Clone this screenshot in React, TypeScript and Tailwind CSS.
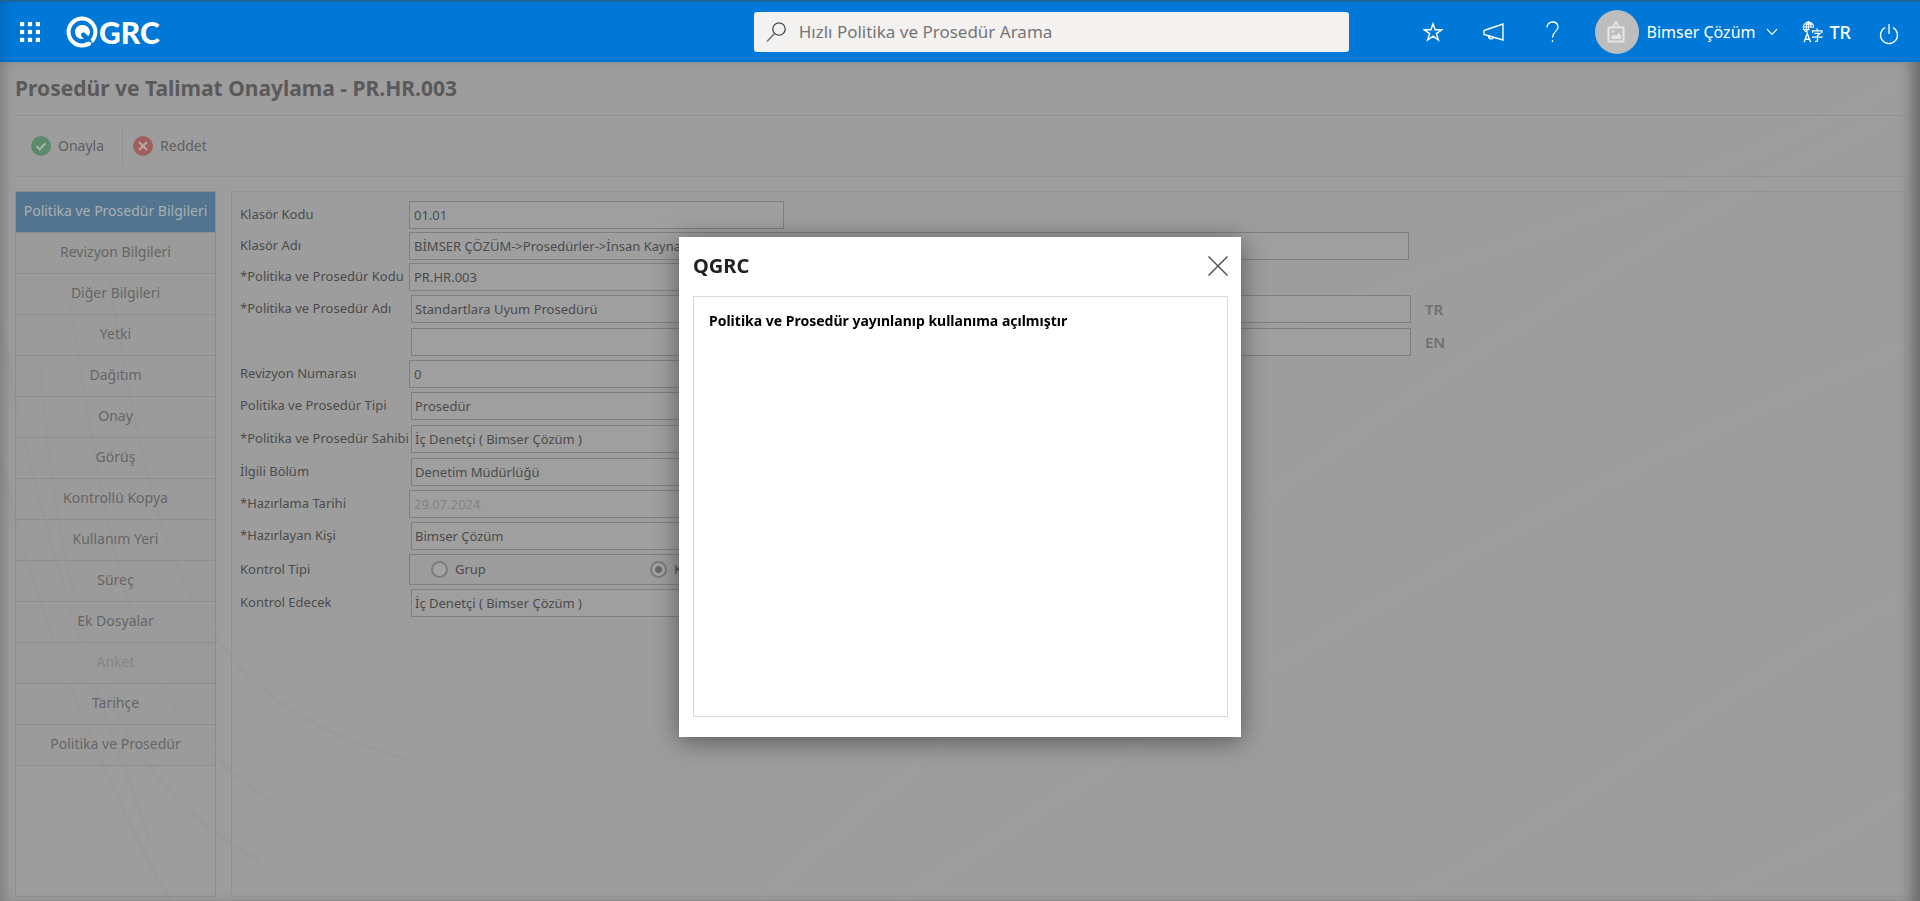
import React from "react";

const tabs = [
  "Politika ve Prosedür Bilgileri",
  "Revizyon Bilgileri",
  "Diğer Bilgileri",
  "Yetki",
  "Dağıtım",
  "Onay",
  "Görüş",
  "Kontrollü Kopya",
  "Kullanım Yeri",
  "Süreç",
  "Ek Dosyalar",
  "Anket",
  "Tarihçe",
  "Politika ve Prosedür",
];

type FieldRow = {
  id: string;
  label: string;
  value: string;
  inset?: boolean;
  wide?: boolean;
  disabled?: boolean;
  suffix?: string;
};

const rowsTop: FieldRow[] = [
  { id: "folder-code", label: "Klasör Kodu", value: "01.01" },
  { id: "folder-name", label: "Klasör Adı", value: "BİMSER ÇÖZÜM->Prosedürler->İnsan Kaynakları", wide: true },
  { id: "code", label: "*Politika ve Prosedür Kodu", value: "PR.HR.003" },
  { id: "name-tr", label: "*Politika ve Prosedür Adı", value: "Standartlara Uyum Prosedürü", inset: true, wide: true, suffix: "TR" },
  { id: "name-en", label: "", value: "", inset: true, wide: true, suffix: "EN" },
  { id: "revision", label: "Revizyon Numarası", value: "0" },
  { id: "type", label: "Politika ve Prosedür Tipi", value: "Prosedür", inset: true },
  { id: "owner", label: "*Politika ve Prosedür Sahibi", value: "İç Denetçi ( Bimser Çözüm )", inset: true },
  { id: "department", label: "İlgili Bölüm", value: "Denetim Müdürlüğü", inset: true },
  { id: "date", label: "*Hazırlama Tarihi", value: "29.07.2024", disabled: true },
  { id: "author", label: "*Hazırlayan Kişi", value: "Bimser Çözüm", inset: true },
];

const rowsBottom: FieldRow[] = [
  { id: "checker", label: "Kontrol Edecek", value: "İç Denetçi ( Bimser Çözüm )", inset: true },
];

function Field({ row }: { row: FieldRow }) {
  return (
    <div className={"flex items-center " + (row.inset ? "h-[33px] pt-px pb-1" : "h-[31px] pb-[3px]")}>
      <label htmlFor={row.id} className={"shrink-0 whitespace-nowrap " + (row.inset ? "w-[171px]" : "w-[169px]")}>
        {row.label}
      </label>
      <input
        id={row.id}
        aria-label={row.label || "Politika ve Prosedür Adı (EN)"}
        defaultValue={row.value}
        disabled={row.disabled}
        className={
          "h-7 border border-[#7f7f7f] bg-[#9f9f9f] outline-none " +
          (row.inset ? "px-[3px] " : "px-1 ") +
          (row.wide ? "w-[1000px] " : "w-[375px] ") +
          (row.disabled ? "text-[#838383]" : "text-[#4b4b4b]")
        }
      />
      {row.suffix && <span className="ml-3.5 text-[15px] font-semibold text-[#707070]">{row.suffix}</span>}
    </div>
  );
}

function Radio({ id, label, checked }: { id: string; label: string; checked?: boolean }) {
  return (
    <span className="flex w-[219px] shrink-0 items-center gap-[7px]">
      <span className="grid size-[17px] place-items-center">
        <input
          type="radio"
          name="control-type"
          id={id}
          defaultChecked={checked}
          className="peer col-start-1 row-start-1 size-[17px] appearance-none rounded-full border-2 border-[#7c7c7c] bg-[#a3a3a3]"
        />
        <span className="pointer-events-none col-start-1 row-start-1 size-[7px] rounded-full bg-[#6a6a6a] opacity-0 peer-checked:opacity-100" />
      </span>
      <label htmlFor={id}>{label}</label>
    </span>
  );
}

function Logo() {
  return (
    <span className="flex items-center gap-px">
      <svg width="32" height="32" viewBox="0 0 32 32" fill="none" aria-hidden="true">
        <circle cx="16" cy="16" r="13.4" stroke="#fff" strokeWidth="4" />
        <path d="M16 9a7 7 0 1 0 1.6 13.8l-2.8-3.6a3 3 0 0 1 3.600-2.600l4 3.600A7 7 0 0 0 16 9z" fill="#fff" />
        <path d="M19.500 24.500 24 24.500 26.500 28.500" stroke="#0078d7" strokeWidth="2" />
        <path d="M19 26.500 26 26.500 23 30z" fill="#fff" />
      </svg>
      <span className="font-[Lato,sans-serif] text-[30px] leading-9 font-black">GRC</span>
    </span>
  );
}

function Waves() {
  return (
    <svg
      className="pointer-events-none absolute inset-0 size-full"
      viewBox="0 0 1920 840"
      preserveAspectRatio="none"
      fill="none"
      aria-hidden="true"
    >
      <g stroke="#999999" strokeWidth="4" opacity="0.5">
        <path d="M0 260C40 480 100 640 150 780" />
        <path d="M0 400C40 560 90 690 170 840" />
        <path d="M40 300C60 560 110 720 260 800" />
        <path d="M70 240C120 560 140 650 270 740" />
        <path d="M110 220C160 540 210 640 410 700" />
      </g>
      <g stroke="#a0a0a0" strokeWidth="9" opacity="0.6">
        <path d="M760 840C1000 620 1500 240 1880 60" />
        <path d="M900 840C1200 640 1600 400 1920 280" />
        <path d="M1400 840C1600 740 1750 600 1920 530" />
        <path d="M1700 840C1780 800 1860 770 1920 720" />
        <path d="M1240 280C1440 200 1700 130 1900 20" />
      </g>
    </svg>
  );
}

function Header() {
  return (
    <header className="relative z-10 flex h-[62px] shrink-0 items-center border-t-2 border-[#1c6596] bg-[#0078d7] pl-5 pr-[21px] text-white shadow-[inset_14px_0_12px_-10px_#0067b8]">
      <div className="flex flex-[4] items-center">
        <button aria-label="Uygulamalar" className="mr-[26px]">
          <svg width="20" height="20" viewBox="0 0 19 19" fill="#fff">
            {[0, 7.5, 15].map((y) => [0, 7.5, 15].map((x) => <rect key={`${x}-${y}`} x={x} y={y} width="4" height="4" />))}
          </svg>
        </button>
        <a href="#" aria-label="QGRC">
          <Logo />
        </a>
      </div>
      <label className="flex h-10 w-[595px] items-center gap-3 rounded-[3px] bg-[#f3f2f1] px-3">
        <svg className="shrink-0" width="21" height="22" viewBox="0 0 21 22" fill="none" stroke="#4a4a4a" strokeWidth="1.300">
          <circle cx="13" cy="8" r="6.200" />
          <path d="M8.600 12.400 1 20.500" stroke="#777" strokeWidth="1.600" />
        </svg>
        <input
          aria-label="Hızlı Politika ve Prosedür Arama"
          placeholder="Hızlı Politika ve Prosedür Arama"
          className="w-full bg-transparent text-[17px] text-[#333] outline-none placeholder:text-[#757575]"
        />
      </label>
      <div className="flex flex-[3] items-center justify-end">
        <button aria-label="Favoriler">
          <svg width="20" height="20" viewBox="0 0 20 20" fill="none" stroke="#fff" strokeWidth="1.400">
            <path d="M10 1.800 12.100 7.800H18.600L13.400 11.600 15.400 18 10 14.100 4.600 18 6.600 11.600 1.400 7.800H7.900z" />
          </svg>
        </button>
        <button aria-label="Duyurular" className="ml-10">
          <svg width="21" height="20" viewBox="0 0 21 20" fill="none" stroke="#fff" strokeWidth="1.400">
            <path d="M1 8.500 20 2V18L1 12.500zM5.500 13.800A2.800 2.800 0 0 0 10.800 15.300" />
          </svg>
        </button>
        <button aria-label="Yardım" className="ml-[42px]">
          <svg width="13" height="22" viewBox="0 0 13 22" fill="none" stroke="#fff" strokeWidth="1.300">
            <path d="M1 6.500C1 3 3.300 1 6.500 1S12 3 12 6.300C12 10.500 6.500 10.500 6.500 16.500M6.500 19.300V21" />
          </svg>
        </button>
        <button className="ml-9 flex items-center">
          <span className="flex size-11 items-center justify-center rounded-full bg-[#bdbdbd]">
            <svg width="19" height="24" viewBox="0 0 19 24" fill="none" stroke="#e6e6e6" strokeWidth="1.400">
              <rect x="1.500" y="7.500" width="15" height="14" strokeWidth="2" />
              <path d="M5.500 7 9 2.500 12.500 7" />
              <circle cx="9" cy="2" r="1.300" fill="#e6e6e6" stroke="none" />
              <circle cx="6" cy="11.500" r="1.300" fill="#e6e6e6" stroke="none" />
              <path d="M4.500 19V16.500L7 14.500 9 16 11.500 12.500 14 15.500V19z" fill="#e6e6e6" stroke="none" />
            </svg>
          </span>
          <span className="ml-2 text-base">Bimser Çözüm</span>
          <svg className="ml-2.5" width="12" height="8" viewBox="0 0 12 8" fill="none" stroke="#fff" strokeWidth="1.200">
            <path d="M1 1.200 6 6.500 11 1.200" />
          </svg>
        </button>
        <button className="ml-6 flex items-center gap-[7px]">
          <svg width="21" height="22" viewBox="0 0 21 22" fill="none" stroke="#fff" strokeWidth="1.100">
            <path d="M5 11.300A5.200 5.200 0 1 1 11.700 6.500" />
            <path d="M5.200 11C3.600 8 3.800 3.500 6.500.800C8.600 2.500 9.100 4.800 9 6.500" />
            <path d="M1.300 6H11.700M2.200 3.300H10.800M2 8.600H7.500M6.500.800V8.500" />
            <path d="M2 21.300 5.300 12.500 8.600 21.300M3.200 18.300H7.400" strokeWidth="1.400" />
            <path d="M15.200 7.500V9.500M10.500 12V9.800H20V12M12.300 12.300H18L15.500 14.500V19.500Q15.500 20.700 13 20.300M10 16.200H20.700" strokeWidth="1.300" />
          </svg>
          <span className="text-lg font-medium">TR</span>
        </button>
        <button aria-label="Çıkış" className="ml-7 pt-1">
          <svg width="20" height="22" viewBox="0 0 20 22" fill="none" stroke="#fff" strokeWidth="1.300">
            <path d="M10 1V11M6.200 4.500A8.500 8.500 0 1 0 13.800 4.500" />
          </svg>
        </button>
      </div>
    </header>
  );
}

export default function App() {
  return (
    <div className="relative flex min-h-screen flex-col overflow-hidden bg-[#9d9d9d] font-['Noto_Sans',sans-serif] text-[#5f5f5f]">
      <Header />
      <div className="relative flex flex-1 flex-col px-[15px] pb-1">
        <Waves />
        <div className="pointer-events-none absolute inset-0 shadow-[inset_12px_0_12px_-8px_#7d7d7d,inset_-14px_0_14px_-6px_#6b6b6b]" />
        <h1 className="relative flex h-[54px] items-center border-b border-[#919191] text-[21px] font-bold text-[#5a5a5a]">
          Prosedür ve Talimat Onaylama - PR.HR.003
        </h1>
        <div className="relative flex h-[61px] items-center border-b border-[#919191] text-sm">
          <button className="flex h-10 items-center gap-[7px] border-r border-[#8f8f8f] pl-4 pr-[18px]">
            <svg width="20" height="20" viewBox="0 0 20 20" fill="none">
              <circle cx="10" cy="10" r="10" fill="#5c8a6c" />
              <path d="M5.500 10.200 8.700 13.300 14.500 7.300" stroke="#a5b5aa" strokeWidth="2.200" />
            </svg>
            Onayla
          </button>
          <button className="flex h-10 items-center gap-[7px] pl-2.5">
            <svg width="20" height="20" viewBox="0 0 20 20" fill="none">
              <circle cx="10" cy="10" r="10" fill="#a05f5f" />
              <path d="M6 6 14 14M14 6 6 14" stroke="#b8a6a6" strokeWidth="2.200" />
            </svg>
            Reddet
          </button>
        </div>
        <main className="relative mt-3.5 flex flex-1 gap-[15px]">
          <nav className="w-[201px] shrink-0 border border-[#8d8d8d] text-sm">
            {tabs.map((tab, i) => (
              <button
                key={tab}
                disabled={tab === "Anket"}
                className={
                  "block h-[41px] w-full whitespace-nowrap border-b border-[#8d8d8d] pb-0.5 " +
                  (i === 0 ? "bg-[#52748f] text-[#a8b0b6]" : tab === "Anket" ? "bg-[#9a9a9a] text-[#858585]" : "bg-[#999]/60 text-[#666]")
                }
              >
                {tab}
              </button>
            ))}
          </nav>
          <form className="min-w-0 flex-1 border border-[#919191] pl-2 pt-[9px] text-[13px] text-[#4b4b4b]">
            {rowsTop.map((row) => (
              <Field key={row.id} row={row} />
            ))}
            <div className="flex h-[34px] items-center pb-[3px]">
              <span className="w-[169px] shrink-0">Kontrol Tipi</span>
              <div role="radiogroup" aria-label="Kontrol Tipi" className="flex h-[31px] w-[375px] items-center border border-[#7f7f7f] pl-[21px]">
                <Radio id="control-group" label="Grup" />
                <Radio id="control-person" label="Kişi" checked />
              </div>
            </div>
            {rowsBottom.map((row) => (
              <Field key={row.id} row={row} />
            ))}
          </form>
        </main>
      </div>

      <div className="fixed inset-x-0 bottom-0 top-[72px] z-20 flex items-center justify-center">
        <section
          role="dialog"
          aria-modal="true"
          aria-labelledby="dialog-title"
          className="flex h-[500px] w-[562px] flex-col bg-white pl-3.5 pr-[13px] pb-5 shadow-[0_4px_24px_rgba(0,0,0,0.45)]"
        >
          <div className="flex h-[59px] shrink-0 items-center justify-between">
            <h2 id="dialog-title" className="text-xl font-bold text-[#222]">
              QGRC
            </h2>
            <button aria-label="Kapat">
              <svg width="20" height="20" viewBox="0 0 20 20" fill="none" stroke="#555" strokeWidth="1.500">
                <path d="M.500.500 19.500 19.500M19.500.500.500 19.500" />
              </svg>
            </button>
          </div>
          <p className="flex-1 border border-[#d9d9d9] px-[15px] py-3.5 text-sm font-bold text-black">
            Politika ve Prosedür yayınlanıp kullanıma açılmıştır
          </p>
        </section>
      </div>
    </div>
  );
}
